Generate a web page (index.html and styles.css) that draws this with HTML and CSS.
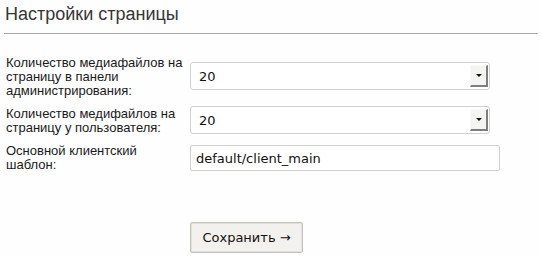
FILE: index.html
```html
<!DOCTYPE html>
<html lang="ru">
<head>
<meta charset="utf-8">
<title>Настройки страницы</title>
<link rel="stylesheet" href="styles.css">
</head>
<body>
<div class="page">
  <h1 class="title">Настройки страницы</h1>
  <hr class="rule">
  <form class="settings">
    <label class="label">Количество медиафайлов на страницу в панели администрирования:</label>
    <div class="control">
      <div class="select"><span class="select-value">20</span><span class="select-btn"><span class="tri"></span></span></div>
    </div>
    <label class="label">Количество медифайлов на страницу у пользователя:</label>
    <div class="control">
      <div class="select"><span class="select-value">20</span><span class="select-btn"><span class="tri"></span></span></div>
    </div>
    <label class="label">Основной клиентский шаблон:</label>
    <div class="control">
      <div class="input">default/client_main</div>
    </div>
    <div class="actions">
      <button type="button" class="button">Сохранить →</button>
    </div>
  </form>
</div>
</body>
</html>
```

FILE: styles.css
```css
html, body {
  margin: 0;
  padding: 0;
  background: #fefefe;
}
.page {
  padding: 0 3px 0 4px;
  font-family: "Liberation Sans", Arial, sans-serif;
  color: #222;
}
.title {
  margin: 0;
  padding: 3px 0 0 1px;
  font-size: 18px;
  line-height: 22px;
  font-weight: normal;
  color: #363636;
}
.rule {
  margin: 8px 0 0 0;
  border: 0;
  border-top: 1px solid #a8a8a8;
  height: 0;
}
.settings {
  display: grid;
  grid-template-columns: 184px 310px;
  row-gap: 9px;
  align-items: center;
  padding: 22px 0 0 2px;
}
.label {
  font-size: 13px;
  line-height: 14px;
  color: #1a1a1a;
}
.control {
  display: flex;
}
.select {
  box-sizing: border-box;
  width: 300px;
  height: 28px;
  margin-top: -2px;
  border: 1px solid #cfcfcf;
  border-radius: 3px;
  background: #fff;
  display: flex;
  align-items: center;
  justify-content: space-between;
  padding: 0 1px 0 8px;
  font-family: "DejaVu Sans", Verdana, sans-serif;
  font-size: 13px;
  color: #111;
}
.select-btn {
  box-sizing: border-box;
  width: 18px;
  height: 22px;
  background: #f4f4f2;
  border-right: 2px solid #7e7e7e;
  border-bottom: 2px solid #7e7e7e;
  border-top: 1px solid #fafafa;
  border-left: 1px solid #fafafa;
  display: flex;
  align-items: center;
  justify-content: center;
}
.tri {
  width: 0;
  height: 0;
  border-left: 3px solid transparent;
  border-right: 3px solid transparent;
  border-top: 3px solid #111;
  margin-left: 1px;
}
.input {
  box-sizing: border-box;
  width: 310px;
  height: 26px;
  border: 1px solid #cfcfcf;
  border-radius: 2px;
  background: #fff;
  padding: 0 5px;
  display: flex;
  align-items: center;
  font-family: "DejaVu Sans", Verdana, sans-serif;
  font-size: 13px;
  color: #111;
}
.actions {
  grid-column: 2;
  padding-top: 41px;
}
.button {
  box-sizing: border-box;
  width: 113px;
  height: 31px;
  margin: 0;
  padding: 0;
  background: #f3f1ed;
  border: 1px solid #c4c2bd;
  border-radius: 2px;
  box-shadow: inset 0 0 0 1px #e2e0da;
  font-family: "DejaVu Sans", Verdana, sans-serif;
  font-size: 13px;
  color: #111;
}
```
